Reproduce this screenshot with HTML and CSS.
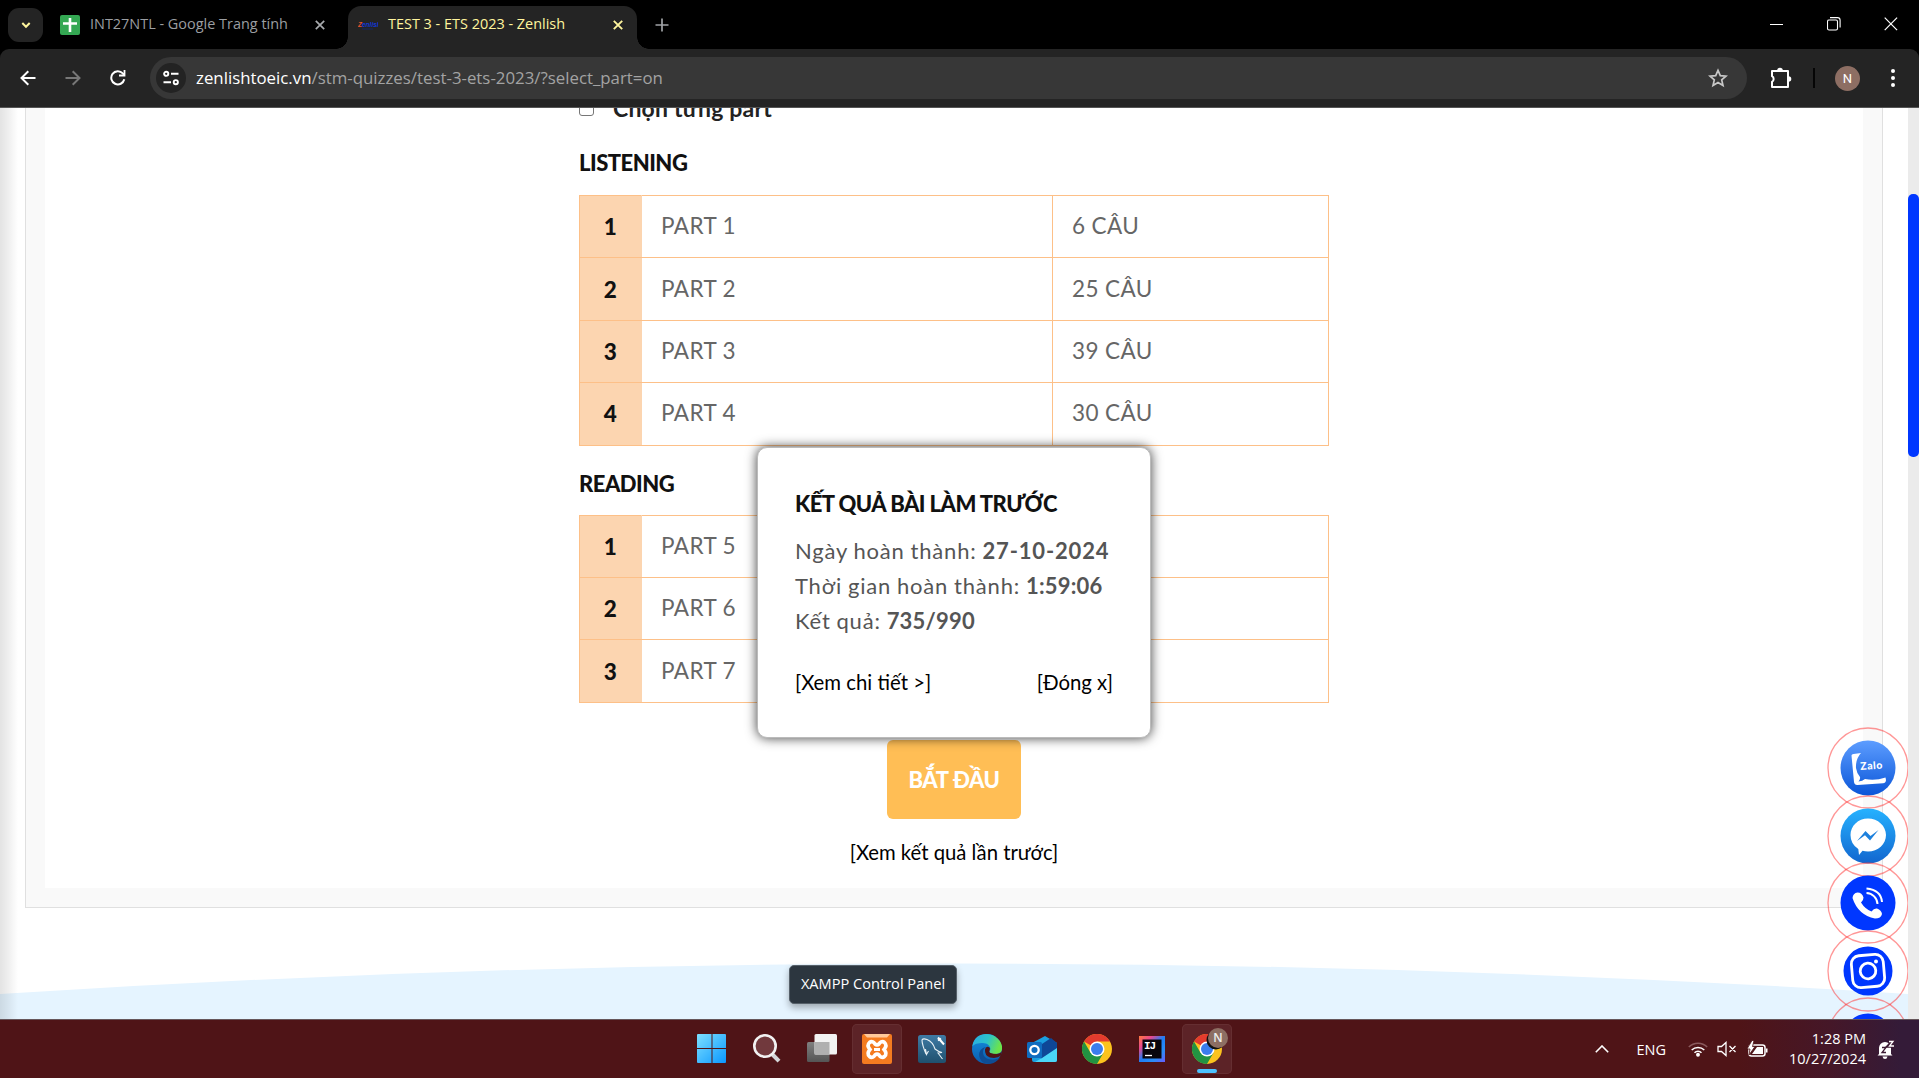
FILE: index.html
```html
<!DOCTYPE html>
<html lang="vi">
<head>
<meta charset="utf-8">
<title>TEST 3 - ETS 2023 - Zenlish</title>
<link rel="stylesheet" href="styles.css">
</head>
<body>
<header class="tabs">
  <div class="tab-search"><svg width="10" height="10" viewBox="0 0 10 10"><path d="M1.3 3 5 6.800 8.700 3" fill="none" stroke="#fff59d" stroke-width="2"/></svg></div>
  <div class="tab">
    <svg width="20" height="20" viewBox="0 0 20 20"><rect width="20" height="20" rx="2" fill="#34a853"/><path d="M10 3v14M3 8.500h14" stroke="#fff" stroke-width="2.600"/></svg>
    <span class="tab-title">INT27NTL - Google Trang tính</span>
    <svg width="10" height="10" viewBox="0 0 10 10"><path d="M.8.8l8.400 8.400M9.200.8.8 9.200" stroke="#a8abae" stroke-width="1.700"/></svg>
  </div>
  <div class="tab tab-active">
    <svg width="20" height="20" viewBox="0 0 20 20"><text x="0" y="12" font-family="Liberation Sans" font-size="6.500" font-weight="700" font-style="italic" fill="#1238d8"><tspan fill="#e5532d">Z</tspan>enlish</text><path d="M4 14h11" stroke="#0d2a8a" stroke-width=".6"/></svg>
    <span class="tab-title">TEST 3 - ETS 2023 - Zenlish</span>
    <svg width="10" height="10" viewBox="0 0 10 10"><path d="M.8.8l8.400 8.400M9.200.8.8 9.200" stroke="#fff59d" stroke-width="1.900"/></svg>
  </div>
  <svg class="plus" width="14" height="14" viewBox="0 0 14 14"><path d="M7 .5v13M.5 7h13" stroke="#a0a3a6" stroke-width="1.700"/></svg>
  <div class="window-buttons">
    <svg width="14" height="14" viewBox="0 0 14 14"><path d="M0 7.500h13" stroke="#fff"/></svg>
    <svg width="14" height="14" viewBox="0 0 14 14"><rect x=".5" y="3" width="10" height="10" rx="1.500" fill="none" stroke="#fff" stroke-width="1.100"/><path d="M3 .6h7.500a2.600 2.600 0 0 1 2.600 2.600V10.500" fill="none" stroke="#fff" stroke-width="1.100"/></svg>
    <svg width="14" height="14" viewBox="0 0 14 14"><path d="M.7.7l12.400 12.400M13.100.7.7 13.100" stroke="#fff" stroke-width="1.200"/></svg>
  </div>
</header>
<nav class="toolbar">
  <div class="nav-buttons">
    <svg width="16" height="16" viewBox="0 0 16 16"><path d="M15.500 8H1.800M8.300 1.200 1.500 8l6.800 6.800" fill="none" stroke="#fff" stroke-width="2"/></svg>
    <svg width="16" height="16" viewBox="0 0 16 16"><path d="M.5 8h13.700M7.700 1.200 14.500 8l-6.800 6.800" fill="none" stroke="#777" stroke-width="2"/></svg>
    <svg width="16" height="16" viewBox="0 0 16 16"><path d="M14.300 9.300A6.600 6.600 0 1 1 12.800 3.400L14.300 5" fill="none" stroke="#fff" stroke-width="2"/><path d="M15.400 0v6.400H9V4.600h4.600V0z" fill="#fff"/></svg>
  </div>
  <div class="omnibox">
    <span class="site-info"><svg width="16" height="16" viewBox="0 0 16 16" fill="none" stroke="#fff" stroke-width="1.900"><circle cx="3.200" cy="3.800" r="2.100"/><path d="M8 3.800h7.500M.5 12.200H8"/><circle cx="12.800" cy="12.200" r="2.100"/></svg></span>
    <span class="url"><b>zenlishtoeic.vn</b>/stm-quizzes/test-3-ets-2023/?select_part=on</span>
    <svg width="20" height="20" viewBox="0 0 20 20"><path d="M10 2.300l2.300 5.300 5.700.5-4.300 3.800 1.300 5.600-5-3-5 3 1.300-5.600L2 8.100l5.700-.5z" fill="none" stroke="#c7c7c7" stroke-width="1.700"/></svg>
  </div>
  <svg class="puzzle" width="22" height="22" viewBox="0 0 22 22"><path d="M2 4h16v16H2v-5.200a3.200 3.200 0 0 0 0-5.600z" fill="none" stroke="#fff" stroke-width="2" stroke-linejoin="round"/><path d="M7.200 3.500a2.800 2.800 0 0 1 5.600 0zM18.500 9.200a2.800 2.800 0 0 1 0 5.600z" fill="#fff"/></svg>
  <i class="divider"></i>
  <span class="avatar">N</span>
  <svg class="dots" width="4" height="18" viewBox="0 0 4 18" fill="#fff"><circle cx="2" cy="2" r="2"/><circle cx="2" cy="9" r="2"/><circle cx="2" cy="16" r="2"/></svg>
</nav>

<div class="viewport">
  <div class="page">
    <svg class="wave" width="1908" height="56" viewBox="0 0 1908 56" preserveAspectRatio="none"><path d="M0 31Q954-30 1908 31V56H0z" fill="#e5f4ff"/></svg>
    <main class="frame">
      <div class="sheet">
        <div class="quiz">
          <label class="choose"><span class="box"></span>Chọn từng part</label>
          <h3>LISTENING</h3>
          <table>
            <tr><th>1</th><td>PART 1</td><td>6 CÂU</td></tr>
            <tr><th>2</th><td>PART 2</td><td>25 CÂU</td></tr>
            <tr><th>3</th><td>PART 3</td><td>39 CÂU</td></tr>
            <tr><th>4</th><td>PART 4</td><td>30 CÂU</td></tr>
          </table>
          <h3>READING</h3>
          <table>
            <tr><th>1</th><td>PART 5</td><td>30 CÂU</td></tr>
            <tr><th>2</th><td>PART 6</td><td>16 CÂU</td></tr>
            <tr><th>3</th><td>PART 7</td><td>54 CÂU</td></tr>
          </table>
          <button class="start">BẮT ĐẦU</button>
          <a class="previous">[Xem kết quả lần trước]</a>
        </div>
      </div>
    </main>
    <section class="modal">
      <h4>KẾT QUẢ BÀI LÀM TRƯỚC</h4>
      <p>Ngày hoàn thành: <b class="date">27-10-2024</b></p>
      <p>Thời gian hoàn thành: <b>1:59:06</b></p>
      <p>Kết quả: <b>735/990</b></p>
      <div class="modal-links"><a>[Xem chi tiết &gt;]</a><a>[Đóng x]</a></div>
    </section>
    <aside class="contacts">
      <svg viewBox="-41 -41 82 82"><defs><linearGradient id="za" x2="0" y2="1"><stop stop-color="#5d9dff"/><stop offset="1" stop-color="#0a55d8"/></linearGradient></defs><circle class="ring" r="40"/><circle r="27.500" fill="url(#za)"/><path d="M-16.500-12.500q0-1.200 2-1.500l7.500-1Q-12.500-9-12 0q.8 5.500 4 9 .5 2.500-1.500 4.500 4-.5 6.500-2.500 10 2 20.500-1.500l.5 2.500q0 3-3 3.300L-10.500 17q-3 .2-3.500-3z" fill="#fff"/><text x="-7.500" y="1.500" font-family="Lato" font-weight="900" font-size="10.500" fill="#fff" textLength="22" transform="rotate(-4)">Zalo</text></svg>
      <svg viewBox="-41 -41 82 82"><defs><linearGradient id="me" x2="0" y2="1"><stop stop-color="#26b2ff"/><stop offset="1" stop-color="#1266cf"/></linearGradient></defs><circle class="ring" r="40"/><circle r="27.500" fill="url(#me)"/><path d="M0-17.500C10-17.500 18-10 18-1S10 15.500 0 15.500q-3 0-5.500-.8L-9 19l-.7-6Q-17.500 8-17.500-1C-17.500-10-10-17.500 0-17.500z" fill="#fff"/><path d="M-11 5-2.500-5 2.500 0 10.500-6 2 4.500-3-.8z" fill="#1c80dd"/></svg>
      <svg viewBox="-41 -41 82 82"><circle class="ring" r="40"/><circle r="27.500" fill="#0037ff"/><path d="M-15.500-5Q-15-10-10.500-10.500-6-10.500-4.500-5.500-4.500-2.500-7-.5-3 6 3.500 8.500 6 5 9 5.500q4.500 1.500 5 5.500Q13 15.500 7 15.500-10 12-15.500-5z" fill="#fff"/><path d="M-1.500-10A11.500 11.500 0 0 1 9.500 1M-1.500-14.500Q13-13 14-1" fill="none" stroke="#fff" stroke-width="2"/></svg>
      <svg viewBox="-41 -41 82 82"><circle class="ring" r="40"/><circle r="24.500" fill="#0037ff"/><g fill="none" stroke="#fff" stroke-width="2.800" transform="rotate(-5)"><rect x="-16" y="-16" width="32" height="32" rx="8"/><circle r="7.800"/></g><circle cx="8" cy="-9.500" r="2" fill="#fff"/></svg>
      <svg viewBox="-41 -41 82 82"><circle class="ring" r="40"/><circle r="24.500" fill="#0037ff"/></svg>
    </aside>
  </div>
  <div class="scrollbar"><i></i></div>
  <div class="tooltip">XAMPP Control Panel</div>
</div>

<footer class="taskbar">
  <div class="apps">
    <span class="app"><svg width="30" height="30" viewBox="0 0 30 30"><defs><linearGradient id="w" x2="1" y2="1"><stop stop-color="#7ee0ff"/><stop offset="1" stop-color="#0a97ff"/></linearGradient></defs><path d="M1 0h13.500v14H0V1q0-1 1-1zM15.500 0H28q1 0 1 1v13H15.500zM0 15h14.500v14H1q-1 0-1-1zM15.500 15H29v13q0 1-1 1H15.500z" fill="url(#w)"/></svg></span>
    <span class="app"><svg width="30" height="30" viewBox="0 0 30 30"><path d="M20.500 20.500l6.500 6.700" stroke="#d4d6d9" stroke-width="4"/><circle cx="13" cy="12" r="10.700" fill="#71393d" stroke="#f2f2f2" stroke-width="2.600"/></svg></span>
    <span class="app"><svg width="30" height="30" viewBox="0 0 30 30"><defs><linearGradient id="tv" x2="0" y2="1"><stop stop-color="#808080"/><stop offset="1" stop-color="#555"/></linearGradient></defs><rect x="0" y="8" width="22.500" height="20" rx="1.500" fill="url(#tv)"/><rect x="7.500" y="0" width="22.500" height="20.500" rx="1.500" fill="#f2f2f2"/><path d="M7.500 8h15v12.500h-15z" fill="#b0b0b0"/></svg></span>
    <span class="app app-open"><svg width="30" height="30" viewBox="0 0 30 30"><rect width="30" height="30" rx="2" fill="#f47b20"/><path d="M2 0h26l-3 3.500H5z" fill="#ffc99b"/><path d="M7.500 8.500c2.500-2 4.500 0 5.500 1.500 1.200 1 2.800 1 4 0 1-1.500 3-3.500 5.500-1.500 2.700 2.500 1.200 5-.5 7 1.700 2 3.200 4.500.5 7-2.500 2-4.500 0-5.500-1.500-1.200-1-2.800-1-4 0-1 1.500-3 3.500-5.500 1.500-2.700-2.500-1.200-5 .5-7-1.700-2-3.200-4.500-.5-7z" fill="none" stroke="#fff" stroke-width="3.600"/><path d="M12 15.500h6" stroke="#fff" stroke-width="3"/></svg></span>
    <span class="app"><svg width="28" height="28" viewBox="0 0 28 28"><defs><linearGradient id="my" x2="0" y2="1"><stop stop-color="#3f7ba5"/><stop offset="1" stop-color="#1f506e"/></linearGradient></defs><rect width="28" height="28" rx="2.500" fill="url(#my)"/><path d="M8 19C5.500 13 4 7 4 5q1-2 5-.5c5 2 7 6 8 9.500q3 2.500 7 3.500l-4 .500 4.500 6M7.500 14l1 5.500 2-3.500" fill="none" stroke="#e9f1f5" stroke-width="1.100"/><path d="M20 2.500l2.500 3 3.500 4M20 5.500l3-2" stroke="#fff" stroke-width="2" fill="none"/></svg></span>
    <span class="app"><svg width="30" height="30" viewBox="0 0 30 30"><defs><linearGradient id="e1" x2="1" y2=".3"><stop stop-color="#29a9e6"/><stop offset=".55" stop-color="#2cc3c9"/><stop offset="1" stop-color="#6be34c"/></linearGradient><linearGradient id="e2" x2="0" y2="1"><stop stop-color="#1590df"/><stop offset="1" stop-color="#0b5cae"/></linearGradient></defs><circle cx="15" cy="15" r="15" fill="url(#e2)"/><path d="M.3 12.500C2-1 16-2 23 2.500 30 7 31.500 14 29 18q-3 3-10 1.500c-2-.5-2-1.500-1-3C19.500 13 16 9 11 9 6 9 2 10 .3 12.500z" fill="url(#e1)"/><path d="M14 13c-4 2-4 8 0 11 4 2.500 10 2 14-.5-4 6-11 8-17 5-6-5-5-14 3-15.500z" fill="#0e4c94"/><path d="M30 16.500q-1 3-5 3.500-4 0-6.500-1-2-1-1-2.500 1-2 0-3-3.500-2-4.500 2-.5 6 5 8 7 1.500 11-2z" fill="#4f1417"/></svg></span>
    <span class="app"><svg width="30" height="30" viewBox="0 0 30 30"><path d="M5 9 18 2l12 7v17q0 2-2 2H7q-2 0-2-2z" fill="#1a9fe0"/><path d="M12 12 24 4l6 5v7l-16 9z" fill="#0e4797"/><path d="M15 24 30 14v12q0 2-2 2H8z" fill="#4ad6f7"/><rect y="8" width="15" height="16" rx="1.500" fill="#0f6cbf"/><circle cx="7.500" cy="16" r="4.200" fill="none" stroke="#fff" stroke-width="2.300"/></svg></span>
    <span class="app"><svg width="30" height="30" viewBox="0 0 30 30"><g id="chrome"><circle cx="15" cy="15" r="15" fill="#fcc31e"/><path d="M15 15 2 7.500A15 15 0 0 1 28 7.500H15z" fill="#e33b2e"/><path d="M2 7.500A15 15 0 0 0 15 30l6.500-11.300L15 15 8.500 18.700z" fill="#229342"/><circle cx="15" cy="15" r="7.500" fill="#fff"/><circle cx="15" cy="15" r="6" fill="#3b7ded"/></g></svg></span>
    <span class="app"><svg width="26" height="26" viewBox="0 0 26 26"><defs><linearGradient id="ij" x2="1" y2="1"><stop stop-color="#ff7a3c"/><stop offset=".25" stop-color="#e8488f"/><stop offset=".5" stop-color="#1e7df5"/><stop offset=".75" stop-color="#2a8df5"/><stop offset="1" stop-color="#6a5cff"/></linearGradient></defs><rect width="26" height="26" fill="url(#ij)"/><rect x="3.500" y="3.500" width="19" height="19" fill="#08050c"/><text x="5" y="13" font-family="Liberation Mono" font-size="11" font-weight="700" fill="#fff" textLength="12">IJ</text><path d="M6 19.500h7" stroke="#fff" stroke-width="1.300"/></svg></span>
    <span class="app app-open app-running"><svg width="30" height="30" viewBox="0 0 30 30"><use href="#chrome"/><circle cx="24" cy="6" r="9.500" fill="#111"/></svg><em>N</em></span>
  </div>
  <div class="tray">
    <svg width="14" height="8" viewBox="0 0 14 8"><path d="M.8 7.200 7 1l6.200 6.200" fill="none" stroke="#fff" stroke-width="1.600"/></svg>
    <span class="lang">ENG</span>
    <svg class="wifi" width="20" height="16" viewBox="0 0 20 16" fill="none" stroke="#fff" stroke-width="1.500"><path d="M.8 6a13 13 0 0 1 18.400 0" stroke="#8a5a5d"/><path d="M3.700 9a9 9 0 0 1 12.600 0M6.500 11.800a5 5 0 0 1 7 0"/><circle cx="10" cy="13.800" r="1.200" fill="#fff"/></svg>
    <svg class="speaker" width="20" height="16" viewBox="0 0 20 16" fill="none" stroke="#fff" stroke-width="1.300"><path d="M1 5.500h3.500L9 1.500v13l-4.500-4H1zM12.500 5l6 6M18.500 5l-6 6"/></svg>
    <svg class="battery" width="21" height="18" viewBox="0 0 21 18"><rect x="2" y="5" width="16" height="11" rx="2.500" fill="none" stroke="#fff" stroke-width="1.500"/><path d="M10 7h6v7H5zM19 8.500h1.500v4H19z" fill="#fff"/><path d="M5 .5 0 9h3l-1 6 6-8.500H5.500L7 .5z" fill="#fff" stroke="#4f1417" stroke-width=".8"/></svg>
    <div class="clock"><span>1:28 PM</span><span>10/27/2024</span></div>
    <svg class="bell" width="18" height="19" viewBox="0 0 18 19"><path d="M2 14V8a6 6 0 0 1 12 0v6l1.500 1.500H.5zM5.500 16.500h5Q10 19 8 19t-2.500-2.500z" fill="#fff"/><path d="M5 7.500h4L5 12.500h4" stroke="#3c1a33" stroke-width="1.300" fill="none"/><path d="M11 .8h5.500l-5 5.200h5.500" stroke="#3c1a33" stroke-width="3.500" fill="none"/><path d="M12 1.500h4L12.500 6H17" stroke="#fff" stroke-width="1.300" fill="none"/></svg>
  </div>
</footer>
</body>
</html>
```
FILE: styles.css
```css
* { box-sizing: border-box; }
body {
  margin: 0;
  width: 1919px;
  height: 1078px;
  overflow: hidden;
  display: flex;
  flex-direction: column;
  background: #000;
  font-family: "Open Sans", "Noto Sans", sans-serif;
}
svg { display: block; flex: none; }

/* Tab strip */
.tabs { height: 49px; display: flex; align-items: center; padding-left: 8px; flex: none; }
.tab-search { width: 35px; height: 34px; border-radius: 11px; background: #242424; display: flex; align-items: center; justify-content: center; }
.tab { display: flex; align-items: center; width: 305px; height: 49px; padding: 0 23px 0 17px; color: #9b9ea1; font-size: 14.450px; }
.tab-title { flex: 1; padding: 0 0 2px 10px; white-space: nowrap; }
.tab-active { position: relative; width: 289px; height: 43px; margin-top: 6px; padding: 0 14px 6px 10px; border-radius: 13px 13px 0 0; background: #242424; color: #fff59d; }
.tab-active::before, .tab-active::after { content: ""; position: absolute; bottom: 0; width: 12px; height: 12px; }
.tab-active::before { left: -12px; background: radial-gradient(circle at 0 0, transparent 11.500px, #242424 12px); }
.tab-active::after { right: -12px; background: radial-gradient(circle at 100% 0, transparent 11.500px, #242424 12px); }
.plus { margin-left: 18px; }
.window-buttons { display: flex; gap: 43px; margin-left: auto; padding: 0 21px 2px 0; }

/* Address bar */
.toolbar { height: 59px; flex: none; display: flex; align-items: center; background: #242424; border-bottom: 1px solid #555; border-radius: 9px 9px 0 0; }
.nav-buttons { display: flex; gap: 29px; padding-left: 20px; width: 150px; }
.omnibox { width: 1597px; height: 42px; border-radius: 21px; background: #373737; display: flex; align-items: center; padding: 0 19px 0 6px; }
.site-info { width: 30px; height: 30px; border-radius: 50%; background: #232323; display: flex; align-items: center; justify-content: center; }
.url { flex: 1; padding: 0 0 1px 10px; font-size: 16.840px; color: #a3a3a3; white-space: nowrap; }
.url b { font-weight: 400; color: #fff; }
.puzzle { margin-left: 23px; }
.divider { width: 2px; height: 20px; margin-left: 21px; background: #050505; }
.avatar { width: 25px; height: 25px; margin-left: 20px; border-radius: 50%; background: #8d6e63; color: #fff; font: 13px/25px "Roboto", sans-serif; text-align: center; }
.dots { margin-left: 31px; }

/* Web page */
.viewport { position: relative; height: 911px; flex: none; display: flex; overflow: hidden; background: #fff; }
.page { position: relative; width: 1908px; overflow: hidden; font-family: "Lato", "Noto Sans", sans-serif; }
.page::after { content: ""; position: absolute; inset: 0 auto 0 0; width: 18px; background: linear-gradient(90deg, rgba(0,0,0,.11), rgba(0,0,0,.07) 40%, transparent); }
.wave { position: absolute; left: 0; bottom: 0; }
.frame { width: 1858px; height: 800px; margin-left: 25px; border: 1px solid #e0e0e0; border-top: 0; background: #f9f9f9; padding: 0 19px 19px; }
.sheet { height: 780px; background: #fff; display: flex; justify-content: center; overflow: hidden; }
.quiz { width: 750px; display: flex; flex-direction: column; }
.choose { display: flex; align-items: center; height: 28px; margin-top: -14px; font-size: 23px; letter-spacing: .2px; font-weight: 700; color: #222; }
.box { width: 15px; height: 15px; margin-right: 19px; border: 1px solid #767676; border-radius: 3px; }
h3 { margin: 24px 0 0; height: 49px; line-height: 34px; font-size: 22px; letter-spacing: -.5px; font-weight: 900; color: #111; }
table { width: 750px; border-collapse: collapse; table-layout: fixed; font-size: 22.500px; letter-spacing: .4px; color: #666; }
tr { height: 62.400px; }
th, td { border: 1px solid #fdc088; padding: 0 19px 2px; text-align: left; }
th { width: 62px; padding: 0; text-align: center; background: #fcd5b0; border-right-color: #fcd5b0; color: #111; font-weight: 900; }
td:nth-child(2) { width: 411px; }
table + h3 { margin-top: 21px; height: 48px; }
.start { align-self: center; width: 134px; height: 79px; margin-top: 37px; border: 0; border-radius: 6px; background: #ffbe55; color: #fff; font: 900 22px "Lato", sans-serif; letter-spacing: -.4px; padding: 0; }
.previous { align-self: center; margin-top: 21px; font-size: 20.300px; color: #000; }

/* Previous result dialog */
.modal { position: absolute; left: 757px; top: 339px; width: 394px; height: 291px; padding: 38px 37px; border: 1px solid #bbb; border-radius: 10px; background: #fff; box-shadow: 0 0 12px rgba(0,0,0,.75); white-space: nowrap; }
.modal h4 { margin: 1px 0 13px; font-size: 22px; line-height: 34px; letter-spacing: -.55px; font-weight: 900; color: #111; }
.modal p { margin: 0; height: 35px; line-height: 34px; font-size: 22px; letter-spacing: .8px; word-spacing: -.5px; color: #555; }
.modal p b { letter-spacing: .2px; }
.modal p .date { letter-spacing: .85px; }
.modal-links { display: flex; justify-content: space-between; margin-top: 28px; font-size: 20.350px; line-height: 30px; color: #000; }
.contacts { position: absolute; left: 1827px; top: 619px; display: flex; flex-direction: column; }
.contacts svg { width: 82px; height: 82px; margin-bottom: -14.500px; }
.ring { fill: none; stroke: #ff3030; stroke-opacity: .5; stroke-width: 1.300; }
.scrollbar { width: 11px; background: #ebebeb; padding-top: 86px; }
.scrollbar i { display: block; height: 263px; border-radius: 5px; background: #0037ff; }
.tooltip { position: absolute; left: 789px; top: 857px; width: 168px; height: 39px; border-radius: 5px; background: #2c363f; border: 1px solid #566069; color: #fff; font-size: 14.600px; line-height: 35px; text-align: center; box-shadow: 0 4px 7px rgba(0,0,0,.3); white-space: nowrap; }

/* Taskbar */
.taskbar { height: 59px; flex: none; display: flex; align-items: center; padding-left: 687px; background: linear-gradient(90deg, #4f1417 1740px, #451728 1830px, #341b38 1900px); border-top: 1px solid #66555a; color: #fff; }
.apps { display: flex; gap: 5px; }
.app { position: relative; width: 50px; height: 50px; display: flex; align-items: center; justify-content: center; border-radius: 5px; }
.app-open { background: #5c2327; box-shadow: inset 0 0 0 1px #652e31; }
.app-running::after { content: ""; position: absolute; left: 15px; bottom: 1px; width: 20px; height: 4px; border-radius: 2px; background: #4cc2ff; }
.app em { position: absolute; left: 26px; top: 4px; width: 20px; height: 20px; border-radius: 50%; background: #8d6e63; font: 600 12px/20px "Open Sans", sans-serif; text-align: center; color: #eee; }
.tray { display: flex; align-items: center; margin-left: auto; padding-right: 24px; font-size: 14.500px; }
.lang { margin-left: 27px; }
.wifi { margin-left: 22px; }
.speaker { margin-left: 9px; }
.battery { margin-left: 10px; }
.clock { width: 98px; display: flex; flex-direction: column; align-items: flex-end; line-height: 20px; padding-bottom: 1px; }
.bell { margin-left: 11px; }
```
